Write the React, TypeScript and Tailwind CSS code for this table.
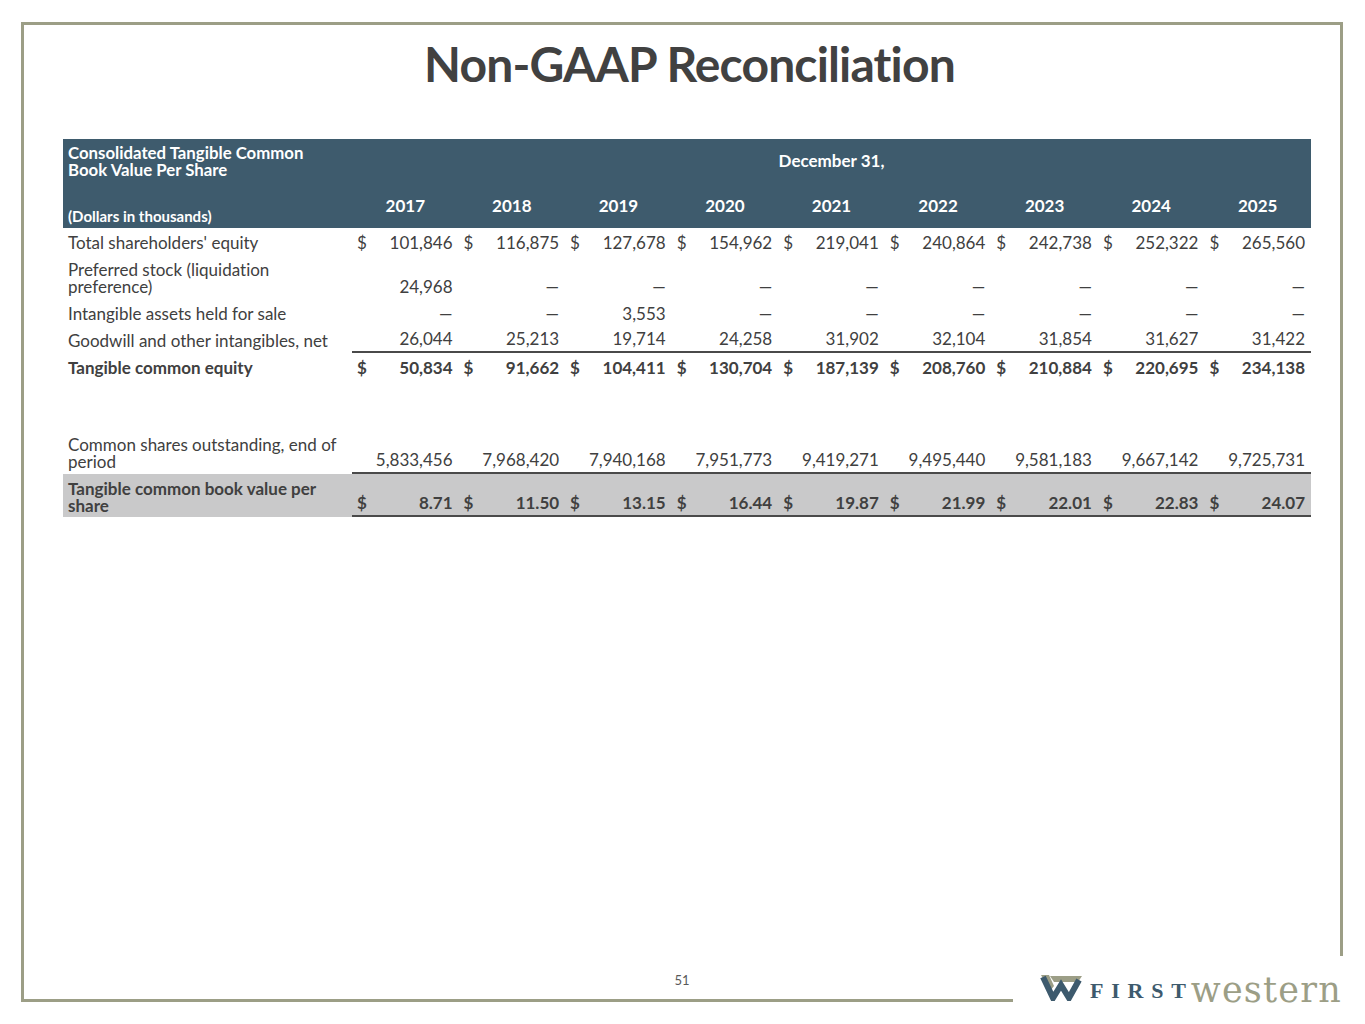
import React from "react";

const years = ["2017", "2018", "2019", "2020", "2021", "2022", "2023", "2024", "2025"];

interface Row {
  label: string;
  values: string[];
  dollar?: boolean;
  bold?: boolean;
  underline?: boolean;
  shaded?: boolean;
  height: string;
}

const rows: Row[] = [
  {
    label: "Total shareholders' equity",
    values: ["101,846", "116,875", "127,678", "154,962", "219,041", "240,864", "242,738", "252,322", "265,560"],
    dollar: true,
    height: "h-[27px]",
  },
  {
    label: "Preferred stock (liquidation preference)",
    values: ["24,968", "—", "—", "—", "—", "—", "—", "—", "—"],
    height: "h-[44px]",
  },
  {
    label: "Intangible assets held for sale",
    values: ["—", "—", "3,553", "—", "—", "—", "—", "—", "—"],
    height: "h-[27px]",
  },
  {
    label: "Goodwill and other intangibles, net",
    values: ["26,044", "25,213", "19,714", "24,258", "31,902", "32,104", "31,854", "31,627", "31,422"],
    underline: true,
    height: "h-[27px]",
  },
  {
    label: "Tangible common equity",
    values: ["50,834", "91,662", "104,411", "130,704", "187,139", "208,760", "210,884", "220,695", "234,138"],
    dollar: true,
    bold: true,
    height: "h-[27px]",
  },
];

const shareRows: Row[] = [
  {
    label: "Common shares outstanding, end of period",
    values: ["5,833,456", "7,968,420", "7,940,168", "7,951,773", "9,419,271", "9,495,440", "9,581,183", "9,667,142", "9,725,731"],
    underline: true,
    height: "h-[44px]",
  },
  {
    label: "Tangible common book value per share",
    values: ["8.71", "11.50", "13.15", "16.44", "19.87", "21.99", "22.01", "22.83", "24.07"],
    dollar: true,
    bold: true,
    underline: true,
    shaded: true,
    height: "h-[43px]",
  },
];

function TableRow({ row }: { row: Row }) {
  return (
    <div
      className={`grid grid-cols-[289px_repeat(9,minmax(0,1fr))] items-stretch text-[17px] leading-[17px] ${row.height} ${
        row.bold ? "font-bold" : "font-normal"
      } ${row.shaded ? "bg-[#c9c9ca]" : ""}`}
    >
      <div className="flex items-start pl-[5px] pr-2 pt-[6px]">
        <span className="max-w-[276px]">{row.label}</span>
      </div>
      {row.values.map((v, i) => (
        <div
          key={i}
          className={`flex items-end justify-between pl-[5px] pr-[6px] pb-[4px] ${
            row.underline ? "border-b-2 border-[#4a4a4a]" : ""
          }`}
        >
          <span>{row.dollar ? "$" : ""}</span>
          <span>{v}</span>
        </div>
      ))}
    </div>
  );
}

function Logo() {
  return (
    <div className="flex items-end">
      <svg width="44" height="28" viewBox="0 0 44 28" className="mb-[1px]">
        <path d="M10 3 H42 L38 9 H14 Z" fill="#9c9e86" />
        <path d="M1 2 H9 L14 13 L10 18 Z" fill="#9c9e86" />
        <path d="M3 4 L13 25 L21 12 L29 25 L39 7" fill="none" stroke="#3d5a6d" strokeWidth="6" strokeLinejoin="miter" />
      </svg>
      <span className="ml-[6px] font-[family-name:Liberation_Serif,serif] text-[22px] font-bold leading-none tracking-[7.8px] text-[#3d5a6d]">
        FIRST
      </span>
      <span className="mb-[-6px] ml-[-3px] font-[family-name:DejaVu_Serif,serif] text-[35px] leading-none tracking-[1.2px] text-[#9c9e86]">
        western
      </span>
    </div>
  );
}

export default function App() {
  return (
    <div className="relative h-[1024px] w-[1365px] bg-white font-[family-name:Lato,sans-serif] text-[#404040] [font-variant-ligatures:none]">
      <div className="pl-[21px] pt-[22px]">
        <div className="flex h-[980px] w-[1322px] flex-col border-[3px] border-[#9c9e86]">
          <h1 className="mt-[14px] pl-[15px] text-center text-[48px] font-bold leading-[50px] tracking-[-0.85px] text-[#414141]">
            Non-GAAP Reconciliation
          </h1>

          <div className="ml-[39px] mt-[50px] w-[1248px]">
            <div className="grid h-[89px] grid-cols-[289px_1fr] bg-[#3e5b6d] font-bold text-white">
              <div className="flex flex-col justify-between pl-[5px] pb-[3px] pt-[5px]">
                <div className="text-[16.8px] leading-[17px]">
                  <div>Consolidated Tangible Common</div>
                  <div>Book Value Per Share</div>
                </div>
                <div className="text-[15px] leading-[17px]">(Dollars in thousands)</div>
              </div>
              <div className="flex flex-col">
                <div className="pt-[13px] text-center text-[17px] leading-[17px]">December 31,</div>
                <div className="mt-[28px] grid grid-cols-9 text-[17px] leading-[17px]">
                  {years.map((y) => (
                    <div key={y} className="text-center">
                      {y}
                    </div>
                  ))}
                </div>
              </div>
            </div>

            {rows.map((r) => (
              <TableRow key={r.label} row={r} />
            ))}

            <div className="h-[50px]" />

            {shareRows.map((r) => (
              <TableRow key={r.label} row={r} />
            ))}
          </div>

          <div className="flex-1" />
          <div className="pb-[11px] text-center text-[13px] leading-[16px] text-[#595959]">51</div>
        </div>
      </div>

      <div className="absolute left-[1013px] top-[956px] h-[56px] w-[352px] bg-white pl-[27px] pt-[17px]">
        <Logo />
      </div>
    </div>
  );
}
